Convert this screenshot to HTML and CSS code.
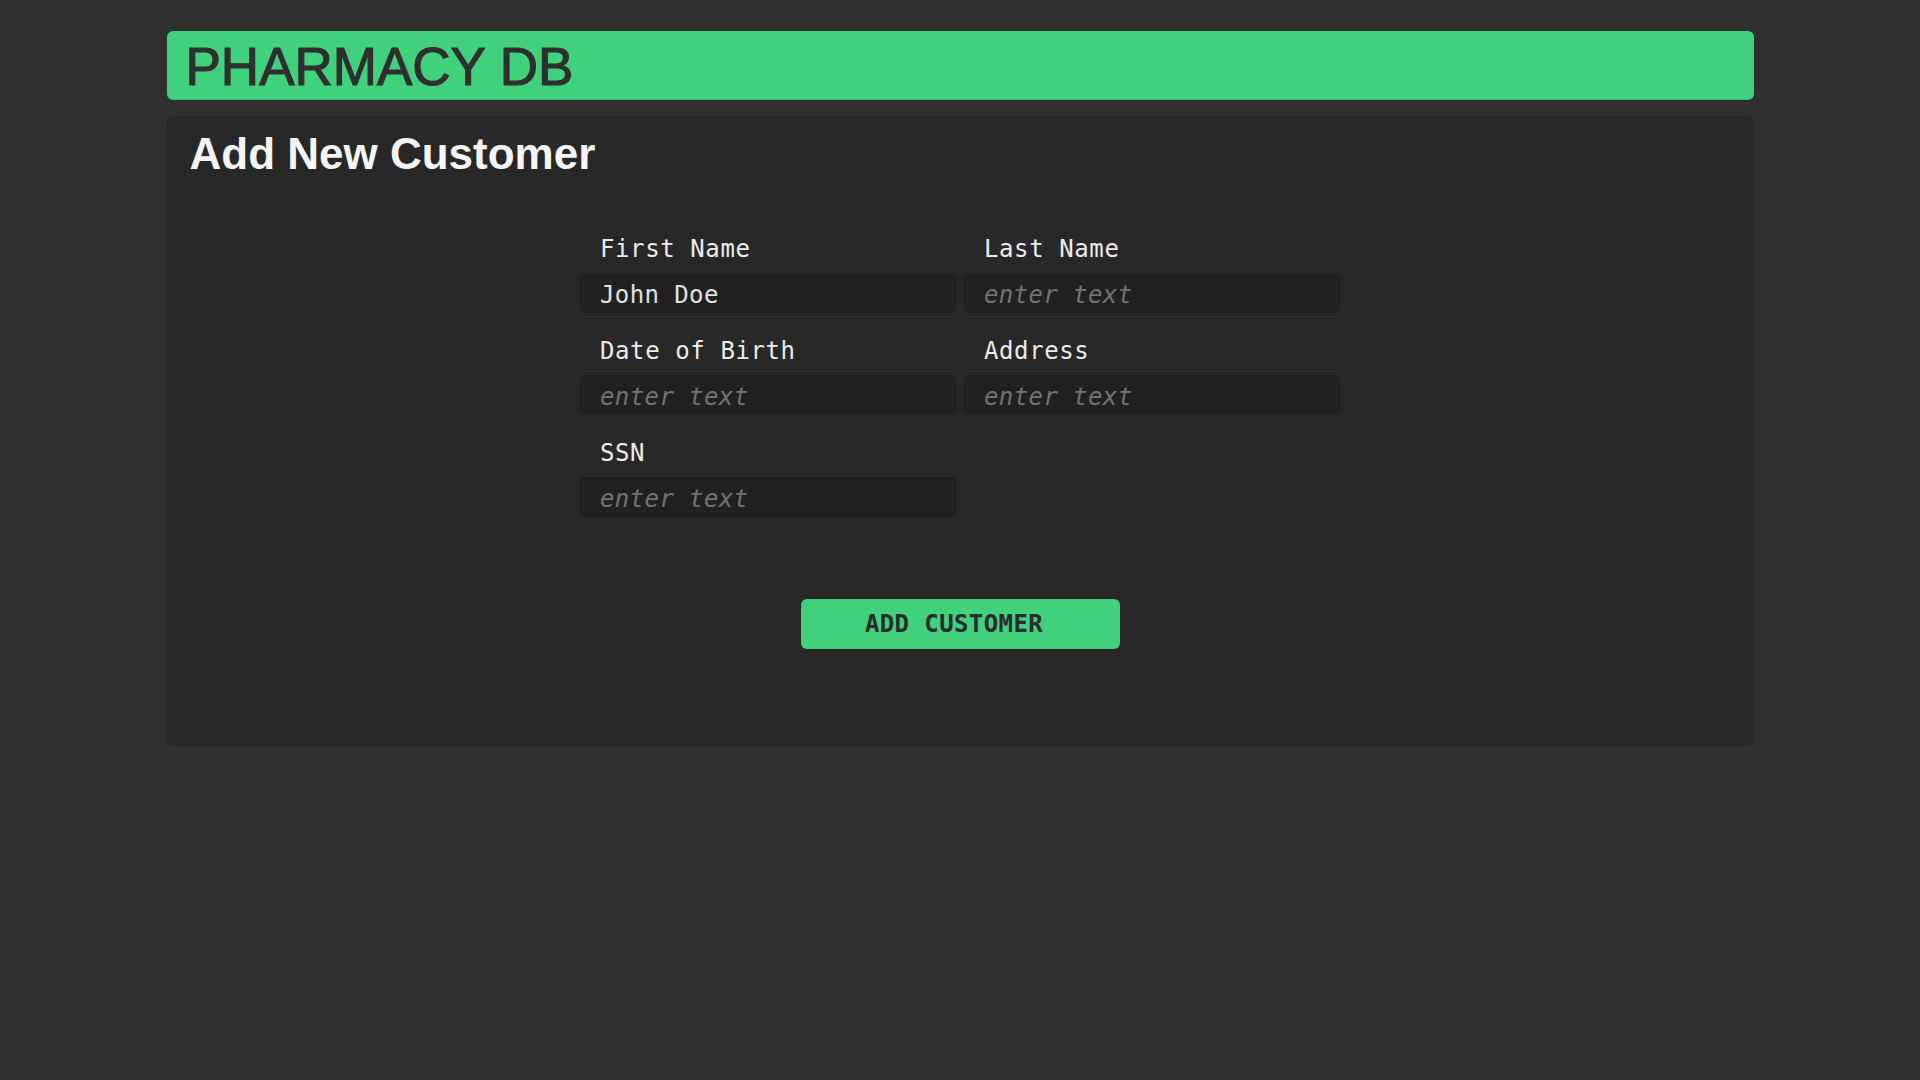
FILE: index.html
```html
<!DOCTYPE html>
<html lang="en">
<head>
<meta charset="utf-8">
<title>Pharmacy DB</title>
<link rel="stylesheet" href="styles.css">
</head>
<body>
<div class="app">
  <header class="topbar">
    <h1 class="brand">PHARMACY DB</h1>
  </header>
  <main class="panel">
    <h2 class="panel-title">Add New Customer</h2>
    <form class="customer-form">
      <div class="fields">
        <div class="field">
          <label class="field-label" for="first">First Name</label>
          <input class="field-input" id="first" type="text" value="John Doe" placeholder="enter text">
        </div>
        <div class="field">
          <label class="field-label" for="last">Last Name</label>
          <input class="field-input" id="last" type="text" placeholder="enter text">
        </div>
        <div class="field">
          <label class="field-label" for="dob">Date of Birth</label>
          <input class="field-input" id="dob" type="text" placeholder="enter text">
        </div>
        <div class="field">
          <label class="field-label" for="address">Address</label>
          <input class="field-input" id="address" type="text" placeholder="enter text">
        </div>
        <div class="field">
          <label class="field-label" for="ssn">SSN</label>
          <input class="field-input" id="ssn" type="text" placeholder="enter text">
        </div>
      </div>
      <div class="actions">
        <button class="submit-btn" type="button">ADD CUSTOMER</button>
      </div>
    </form>
  </main>
</div>
</body>
</html>
```
FILE: styles.css
```css
* {
  box-sizing: border-box;
}

html, body {
  margin: 0;
  padding: 0;
  background: #303030;
}

body {
  font-family: "Liberation Sans", Arial, sans-serif;
  min-height: 1080px;
}

.app {
  width: 1587px;
  margin: 31px auto 0;
}

.topbar {
  background: #41d07c;
  border-radius: 6px;
  height: 69px;
  padding: 6px 17px 4px 19px;
  border-bottom: 1px solid #3bb96f;
}

.brand {
  margin: 0;
  font-family: "Liberation Sans", Arial, sans-serif;
  font-weight: 400;
  font-size: 53px;
  line-height: 59px;
  color: #2f2f2f;
  letter-spacing: 0;
  -webkit-text-stroke: 1.1px #2f2f2f;
}

.panel {
  margin-top: 16px;
  background: #282828;
  border-radius: 7px;
  padding: 13px 23px 97px;
}

.panel-title {
  margin: 0;
  font-family: "Liberation Sans", Arial, sans-serif;
  font-weight: 700;
  font-size: 44px;
  line-height: 50px;
  color: #f5f5f5;
}

.customer-form {
  margin-top: 56px;
  display: flex;
  flex-direction: column;
  align-items: center;
}

.fields {
  display: grid;
  grid-template-columns: 378px 378px;
  column-gap: 6px;
  row-gap: 24px;
}

.field {
  display: flex;
  flex-direction: column;
  gap: 10px;
}

.field-label {
  font-family: "DejaVu Sans Mono", "Liberation Mono", monospace;
  font-size: 24px;
  line-height: 28px;
  letter-spacing: 0.6px;
  color: #ececec;
  padding-left: 21px;
}

.field-input {
  height: 40px;
  width: 100%;
  border: none;
  outline: none;
  border-radius: 6px;
  background: #212121;
  color: #e2e2e2;
  font-family: "DejaVu Sans Mono", "Liberation Mono", monospace;
  font-size: 24px;
  letter-spacing: 0.4px;
  padding: 3px 20px 0 21px;
  margin: 0;
}

.field-input::placeholder {
  color: #737373;
  font-style: italic;
}

.actions {
  margin-top: 82px;
}

.submit-btn {
  width: 319px;
  height: 50px;
  border: none;
  border-radius: 6px;
  background: #41d07c;
  color: #2b2b2b;
  font-family: "DejaVu Sans Mono", "Liberation Mono", monospace;
  font-weight: 700;
  font-size: 24px;
  line-height: 50px;
  letter-spacing: 0.4px;
  padding: 0 12px 0 0;
  cursor: pointer;
}
```
